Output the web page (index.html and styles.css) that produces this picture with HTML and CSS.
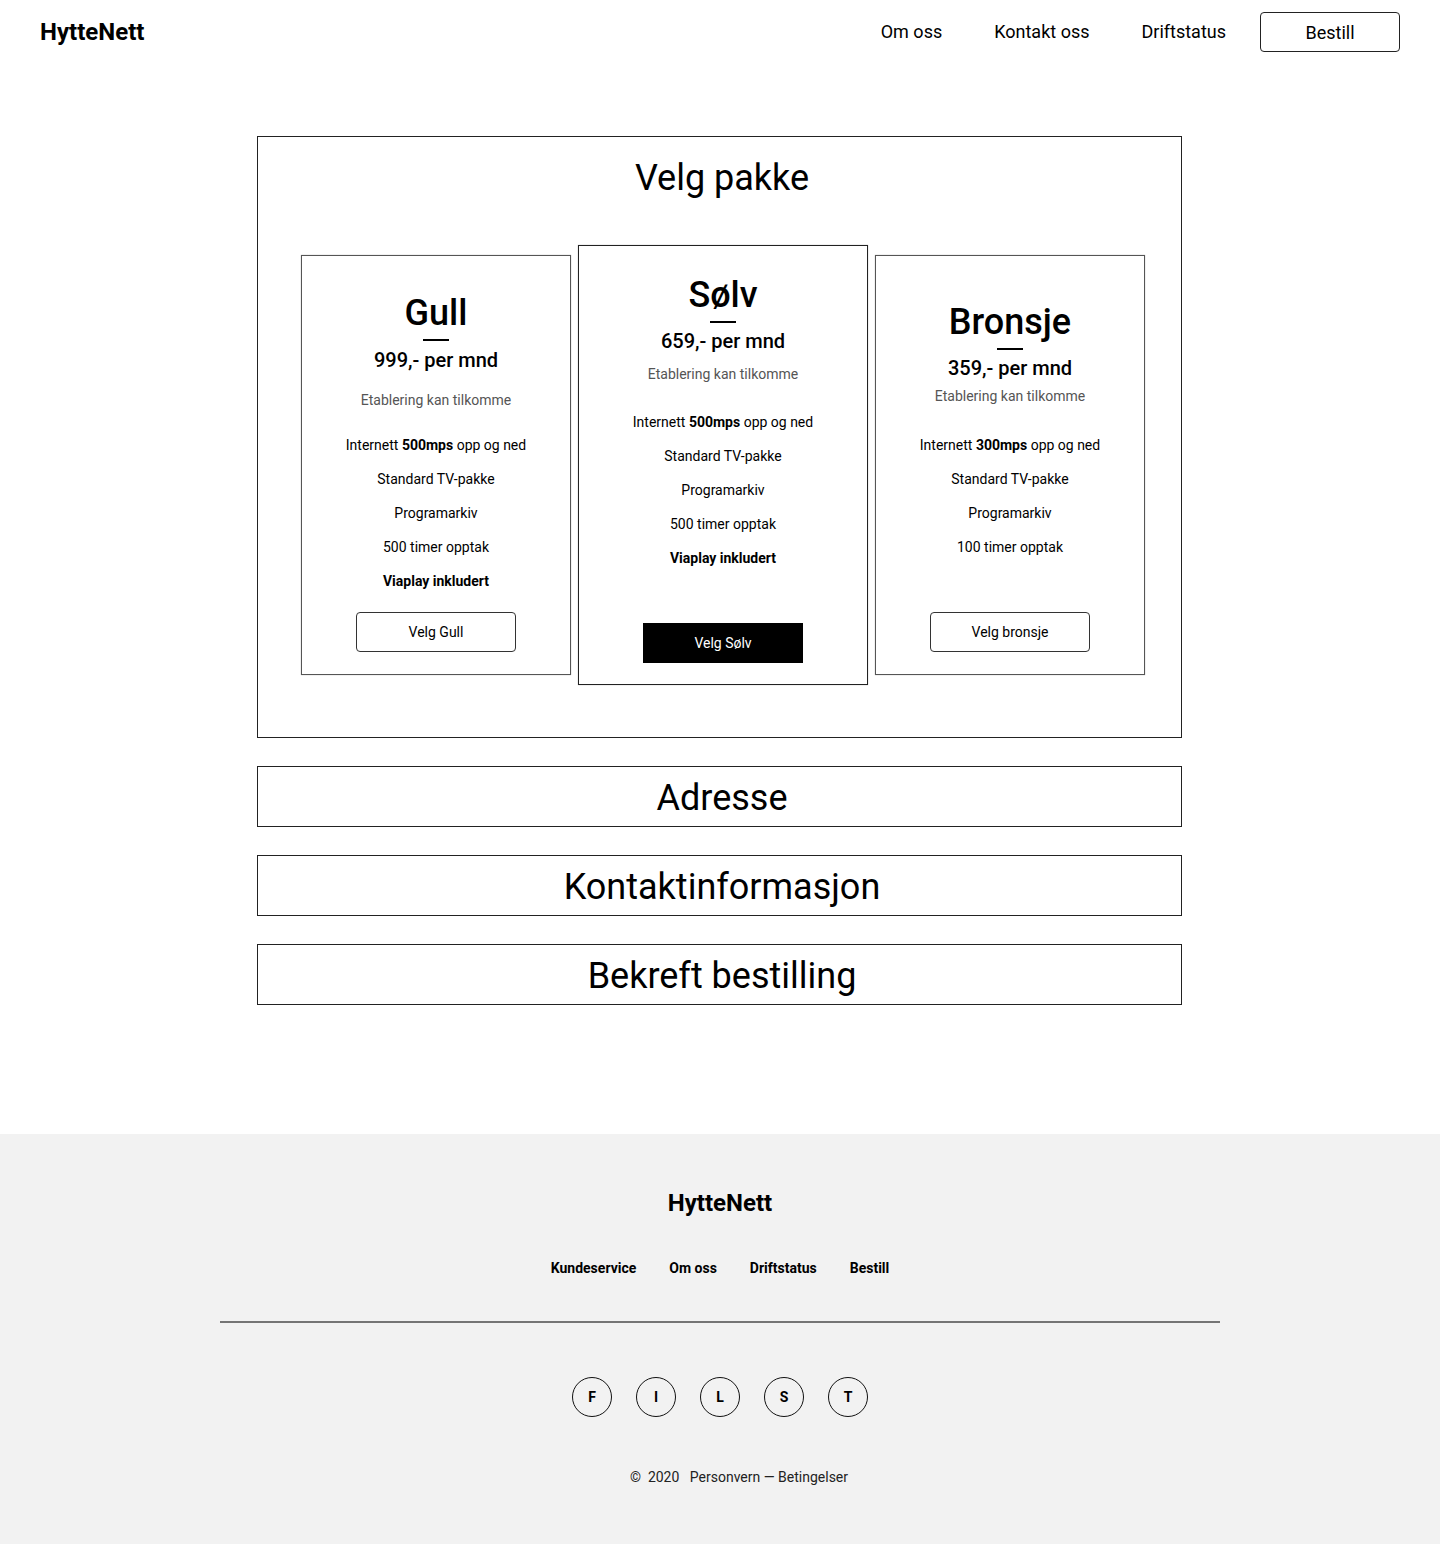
FILE: index.html
```html
<!DOCTYPE html>
<html lang="no">
<head>
<meta charset="utf-8">
<title>HytteNett – Bestill</title>
<link rel="stylesheet" href="styles.css">
</head>
<body>
<header class="header">
  <div class="logo">HytteNett</div>
  <nav class="nav">
    <a class="nav__link" href="#">Om oss</a>
    <a class="nav__link" href="#">Kontakt oss</a>
    <a class="nav__link" href="#">Driftstatus</a>
    <a class="nav__btn" href="#">Bestill</a>
  </nav>
</header>

<main class="main">
  <section class="panel">
    <h2 class="panel__title">Velg pakke</h2>
    <div class="cards">
      <div class="card card--gull">
        <h3 class="card__title">Gull</h3>
        <span class="card__bar"></span>
        <p class="card__price">999,- per mnd</p>
        <p class="card__note">Etablering kan tilkomme</p>
        <ul class="card__features">
          <li>Internett <b>500mps</b> opp og ned</li>
          <li>Standard TV-pakke</li>
          <li>Programarkiv</li>
          <li>500 timer opptak</li>
          <li><b>Viaplay inkludert</b></li>
        </ul>
        <button class="card__btn">Velg Gull</button>
      </div>
      <div class="card card--solv">
        <h3 class="card__title">Sølv</h3>
        <span class="card__bar"></span>
        <p class="card__price">659,- per mnd</p>
        <p class="card__note">Etablering kan tilkomme</p>
        <ul class="card__features">
          <li>Internett <b>500mps</b> opp og ned</li>
          <li>Standard TV-pakke</li>
          <li>Programarkiv</li>
          <li>500 timer opptak</li>
          <li><b>Viaplay inkludert</b></li>
        </ul>
        <button class="card__btn card__btn--dark">Velg Sølv</button>
      </div>
      <div class="card card--bronsje">
        <h3 class="card__title">Bronsje</h3>
        <span class="card__bar"></span>
        <p class="card__price">359,- per mnd</p>
        <p class="card__note">Etablering kan tilkomme</p>
        <ul class="card__features">
          <li>Internett <b>300mps</b> opp og ned</li>
          <li>Standard TV-pakke</li>
          <li>Programarkiv</li>
          <li>100 timer opptak</li>
        </ul>
        <button class="card__btn">Velg bronsje</button>
      </div>
    </div>
  </section>

  <section class="step"><h2 class="step__title">Adresse</h2></section>
  <section class="step"><h2 class="step__title">Kontaktinformasjon</h2></section>
  <section class="step"><h2 class="step__title">Bekreft bestilling</h2></section>
</main>

<footer class="footer">
  <div class="footer__logo">HytteNett</div>
  <nav class="footer__links">
    <a href="#">Kundeservice</a>
    <a href="#">Om oss</a>
    <a href="#">Driftstatus</a>
    <a href="#">Bestill</a>
  </nav>
  <hr class="footer__rule">
  <div class="social">
    <a class="social__item" href="#">F</a>
    <a class="social__item" href="#">I</a>
    <a class="social__item" href="#">L</a>
    <a class="social__item" href="#">S</a>
    <a class="social__item" href="#">T</a>
  </div>
  <p class="copy">©&nbsp; 2020 &nbsp; Personvern — Betingelser</p>
</footer>
</body>
</html>
```

FILE: styles.css
```css
* { box-sizing: border-box; }

html, body {
  margin: 0;
  padding: 0;
}

body {
  font-family: Roboto, "Liberation Sans", Arial, sans-serif;
  color: #000;
  background: #fff;
}

a { color: inherit; text-decoration: none; }

/* Header */
.header {
  height: 64px;
  display: flex;
  align-items: center;
  justify-content: space-between;
  padding: 0 40px;
}

.logo {
  font-size: 24px;
  font-weight: 700;
  line-height: 28px;
}

.nav {
  display: flex;
  align-items: center;
}

.nav__link {
  font-size: 18px;
  line-height: 24px;
  padding: 0 26px;
}

.nav__link:first-child { padding-left: 0; margin-left: 1px; }

.nav__btn {
  margin-left: 8px;
  width: 140px;
  height: 40px;
  border: 1px solid #222;
  border-radius: 4px;
  display: flex;
  align-items: center;
  justify-content: center;
  font-size: 18px;
}

/* Main */
.main {
  width: 925px;
  margin: 72px 0 0 calc(50% - 463px);
  padding-bottom: 129px;
}

.panel {
  border: 1px solid #222;
  padding: 19px 0 52px;
}

.panel__title {
  margin: 0;
  padding-left: 5px;
  text-align: center;
  font-size: 36px;
  font-weight: 400;
  line-height: 44px;
}

.cards {
  margin-top: 45px;
  display: flex;
  justify-content: center;
  align-items: center;
  gap: 7px;
  padding-left: 7px;
}

.card {
  width: 270px;
  height: 420px;
  border: 1px solid #555;
  box-shadow: 0 0 1px rgba(0, 0, 0, 0.35);
  display: flex;
  flex-direction: column;
  align-items: center;
  padding-bottom: 22px;
  text-align: center;
}

.card__title {
  margin: 0;
  font-size: 36px;
  font-weight: 500;
  line-height: 44px;
}

.card__bar {
  display: block;
  width: 26px;
  height: 2px;
  background: #000;
  margin-top: 4px;
}

.card__price {
  margin: 0;
  font-size: 20px;
  font-weight: 500;
  line-height: 24px;
}

.card__note {
  margin: 0;
  font-size: 14px;
  line-height: 20px;
  color: #555;
}

.card__features {
  list-style: none;
  margin: 0;
  padding: 0;
  display: flex;
  flex-direction: column;
  gap: 14px;
  font-size: 14px;
  line-height: 20px;
}

.card__btn {
  margin-top: auto;
  width: 160px;
  height: 40px;
  border: 1px solid #333;
  border-radius: 4px;
  background: #fff;
  color: #000;
  font-family: inherit;
  font-size: 14px;
  cursor: pointer;
}

.card__btn--dark {
  background: #000;
  color: #fff;
  border-color: #000;
  border-radius: 0;
}

.card--gull { padding-top: 35px; }
.card--gull .card__price { margin-top: 7px; }
.card--gull .card__note { margin-top: 18px; }
.card--gull .card__features { margin-top: 25px; }

.card--solv {
  width: 290px;
  height: 440px;
  padding-top: 27px;
  border-color: #222;
}
.card--solv .card__price { margin-top: 6px; }
.card--solv .card__note { margin-top: 11px; }
.card--solv .card__features { margin-top: 28px; }
.card--solv .card__btn { margin-bottom: 0; transform: translateY(1px); }

.card--bronsje { padding-top: 44px; }
.card--bronsje .card__price { margin-top: 6px; }
.card--bronsje .card__note { margin-top: 6px; }
.card--bronsje .card__features { margin-top: 29px; }

/* Steps */
.step {
  margin-top: 28px;
  border: 1px solid #222;
  padding: 9px 0 6px;
}

.step__title {
  margin: 0;
  padding-left: 5px;
  text-align: center;
  font-size: 36px;
  font-weight: 400;
  line-height: 44px;
}

/* Footer */
.footer {
  background: #f2f2f2;
  padding: 55px 0 57px;
  display: flex;
  flex-direction: column;
  align-items: center;
}

.footer__logo {
  font-size: 24px;
  font-weight: 700;
  line-height: 28px;
}

.footer__links {
  margin-top: 41px;
  display: flex;
  gap: 33px;
  font-size: 14px;
  font-weight: 700;
  line-height: 20px;
}

.footer__rule {
  width: 1000px;
  margin: 43px 0 0;
  border: 0;
  height: 2px;
  background: #757575;
}

.social {
  margin-top: 54px;
  display: flex;
  gap: 24px;
}

.social__item {
  width: 40px;
  height: 40px;
  border: 1px solid #111;
  border-radius: 50%;
  display: flex;
  align-items: center;
  justify-content: center;
  font-size: 14px;
  font-weight: 700;
}

.copy {
  margin: 50px 0 0 38px;
  font-size: 14px;
  line-height: 20px;
  color: #222;
}
```
